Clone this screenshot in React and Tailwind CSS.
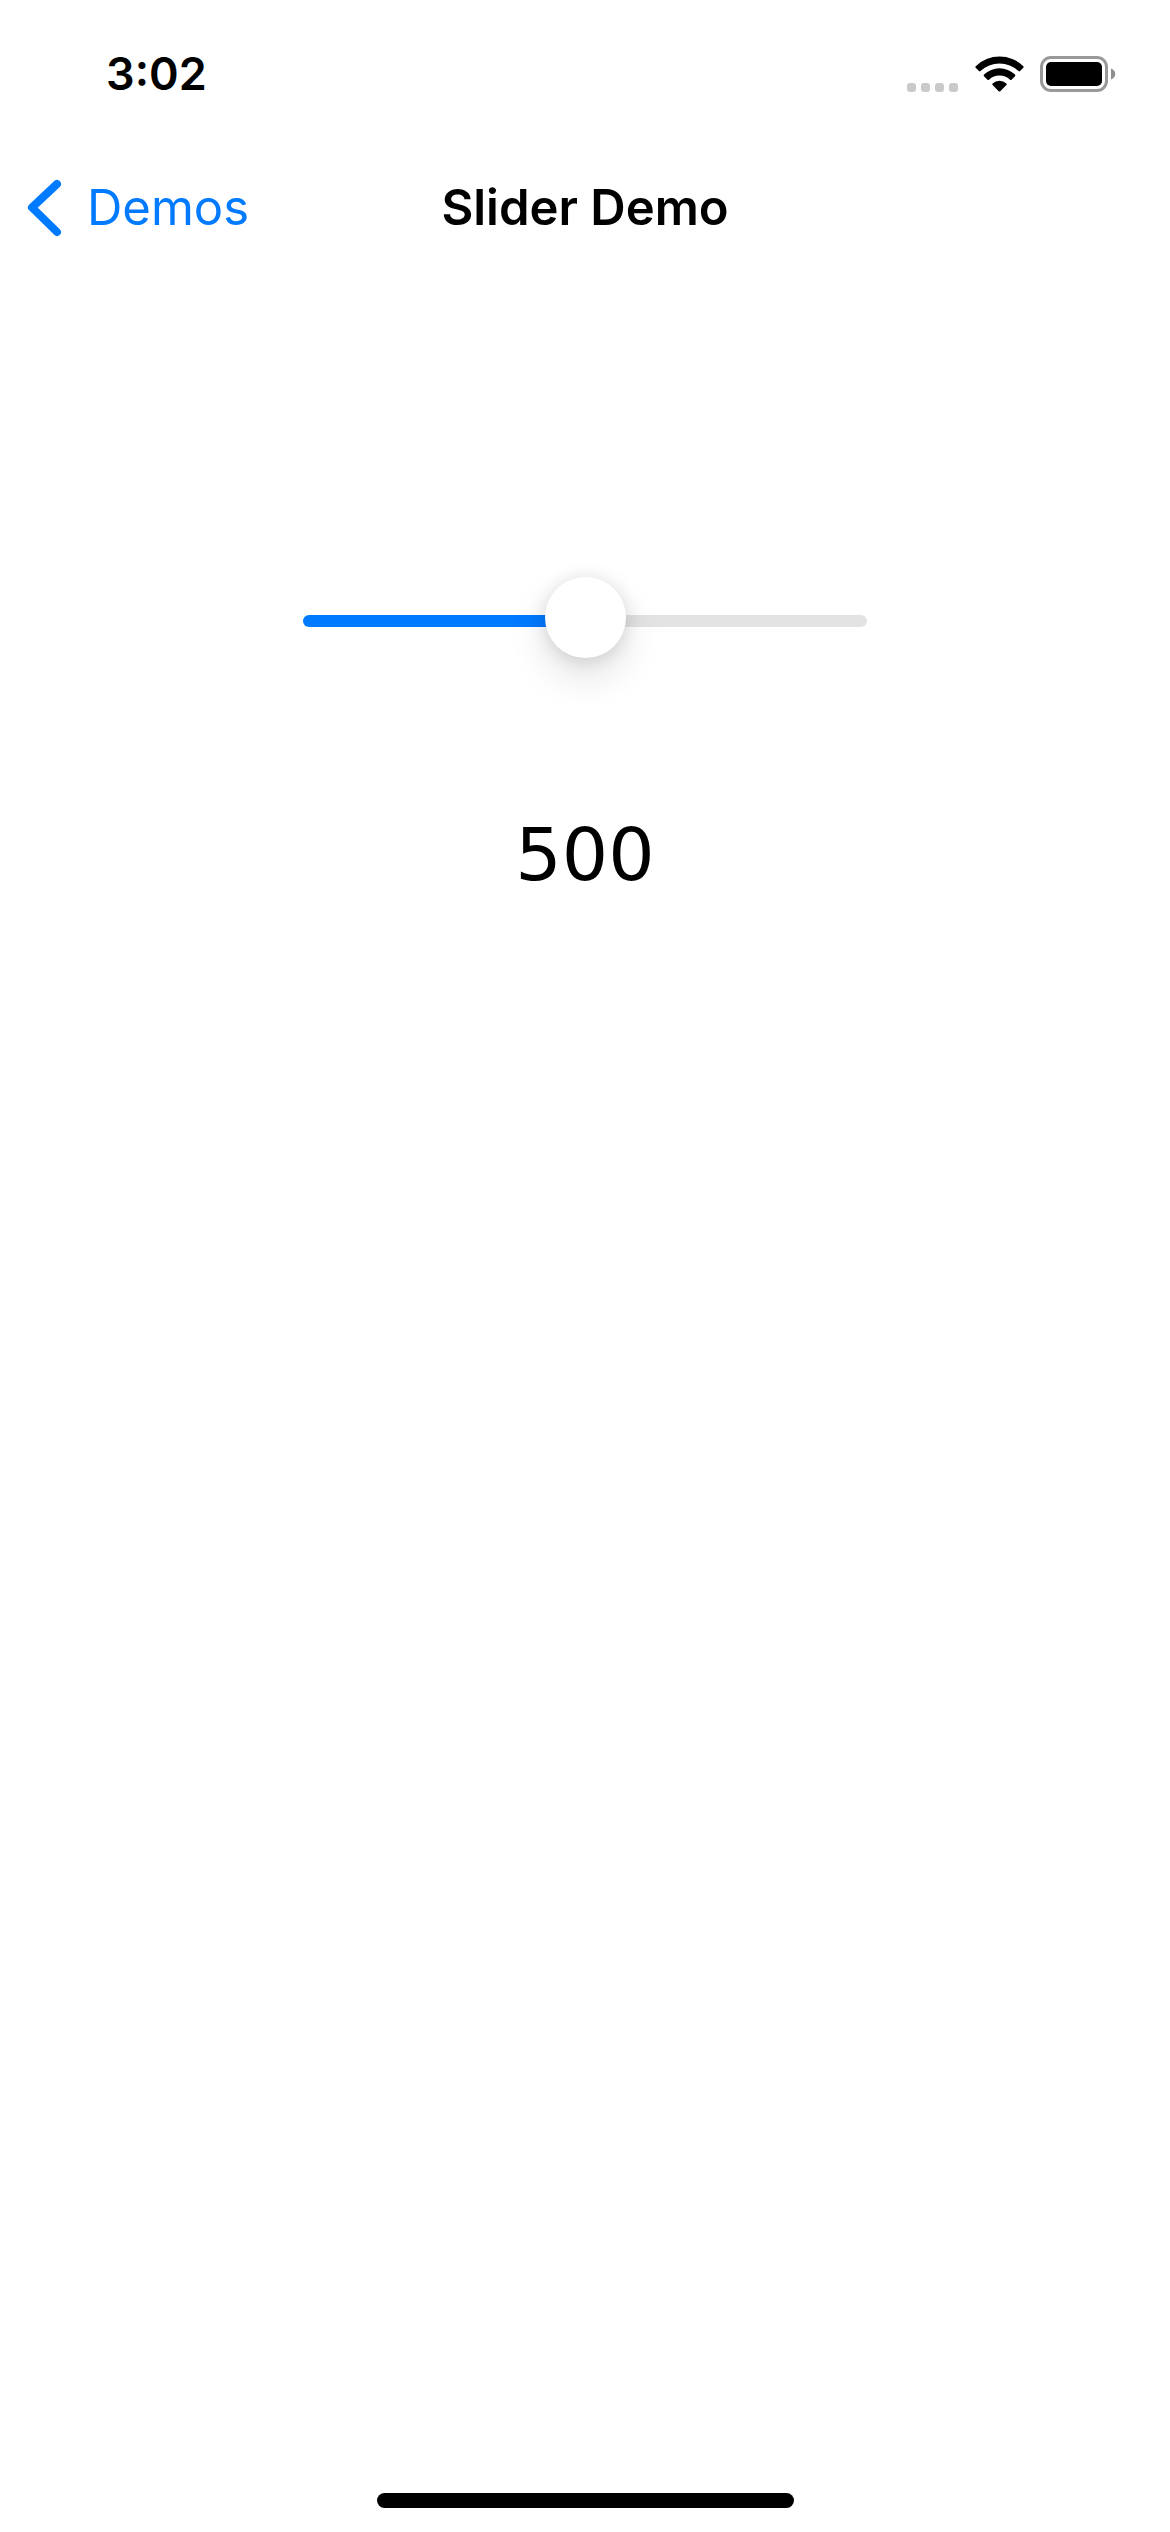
import { useState } from "react";

function StatusBar() {
  return (
    <div className="flex h-[147px] items-center justify-between pl-[106px] pr-[54px]">
      <time className="text-[45px] font-semibold leading-[56px]">3:02</time>
      <div className="flex items-end">
        <svg className="mr-[16px] h-[9px] w-[52px]" viewBox="0 0 52 9" fill="#cacaca" role="img" aria-label="No signal">
          <rect width="9" height="9" rx="3" />
          <rect x="14" width="9" height="9" rx="3" />
          <rect x="28" width="9" height="9" rx="3" />
          <rect x="42" width="9" height="9" rx="3" />
        </svg>
        <svg className="mr-[16px] h-[36px] w-[49px]" viewBox="0 0 49 36" role="img" aria-label="Wi-Fi">
          <path d="M0.7 10.2A34.3 34.3 0 0 1 48.3 10.2Q49 11 48.3 11.8L45 15.1Q44.3 15.8 43.5 15.1A27.7 27.7 0 0 0 5.5 15.1Q4.7 15.8 4 15.1L0.7 11.8Q0 11 0.7 10.2Z" />
          <path d="M9 18.6A22.4 22.4 0 0 1 40 18.6Q40.8 19.4 40 20.2L36.5 23.7Q35.8 24.4 35 23.7A15.5 15.5 0 0 0 14 23.7Q13.2 24.4 12.5 23.7L9 20.2Q8.2 19.4 9 18.6Z" />
          <path d="M17.6 27.4A10.6 10.6 0 0 1 31.4 27.4Q32.2 28.2 31.4 29L25.3 35.2Q24.5 36 23.7 35.2L17.6 29Q16.8 28.2 17.6 27.4Z" />
        </svg>
        <svg className="h-[36px] w-[76px]" viewBox="0 0 76 36" role="img" aria-label="Battery full">
          <rect x="1.5" y="1.5" width="65" height="33" rx="9.5" fill="none" stroke="#999" strokeWidth="3" />
          <rect x="6" y="6" width="56" height="24" rx="5" />
          <path d="M71 12.5Q75.2 14.2 75.2 18T71 23.5Z" fill="#8e8e8e" />
        </svg>
      </div>
    </div>
  );
}

function NavBar() {
  return (
    <header className="grid h-[122px] grid-cols-[1fr_auto_1fr] items-center">
      <button type="button" className="flex items-center gap-[25px] justify-self-start pl-[27px] text-[#007aff]">
        <svg className="h-[58px] w-[35px]" viewBox="0 0 35 58" fill="none" stroke="currentColor" strokeWidth="8" strokeLinecap="round" strokeLinejoin="round" aria-hidden="true">
          <path d="M30 5L5 28.5L30 53" />
        </svg>
        <span className="text-[49px] leading-[60px]">Demos</span>
      </button>
      <h1 className="text-[49px] font-semibold leading-[60px]">Slider Demo</h1>
    </header>
  );
}

export default function App() {
  const [value, setValue] = useState(500);
  return (
    <div className="flex min-h-screen flex-col bg-white font-['Inter',sans-serif] text-black">
      <StatusBar />
      <NavBar />
      <main className="flex flex-1 flex-col items-center pt-[308px]">
        <input
          id="amount"
          type="range"
          min="0"
          max="1000"
          value={value}
          aria-label="Amount"
          onChange={(e) => setValue(Number(e.target.value))}
          style={{ "--fill": `${value / 10}%` }}
          className="h-[87px] w-[564px] max-w-full appearance-none bg-transparent outline-none [&::-webkit-slider-runnable-track]:h-[12px] [&::-webkit-slider-runnable-track]:rounded-full [&::-webkit-slider-runnable-track]:bg-[linear-gradient(to_right,#007aff_var(--fill),#e3e3e4_var(--fill))] [&::-webkit-slider-thumb]:mt-[-38px] [&::-webkit-slider-thumb]:size-[81px] [&::-webkit-slider-thumb]:appearance-none [&::-webkit-slider-thumb]:rounded-full [&::-webkit-slider-thumb]:bg-white [&::-webkit-slider-thumb]:shadow-[0_18px_39px_rgba(0,0,0,0.12),0_2px_18px_rgba(0,0,0,0.12)]"
        />
        <output htmlFor="amount" className="mt-[146px] font-['DejaVu_Sans',sans-serif] text-[73px] leading-[90px]">
          {value}
        </output>
      </main>
      <div className="mx-auto mb-[24px] h-[15px] w-[417px] rounded-full bg-black" />
    </div>
  );
}
